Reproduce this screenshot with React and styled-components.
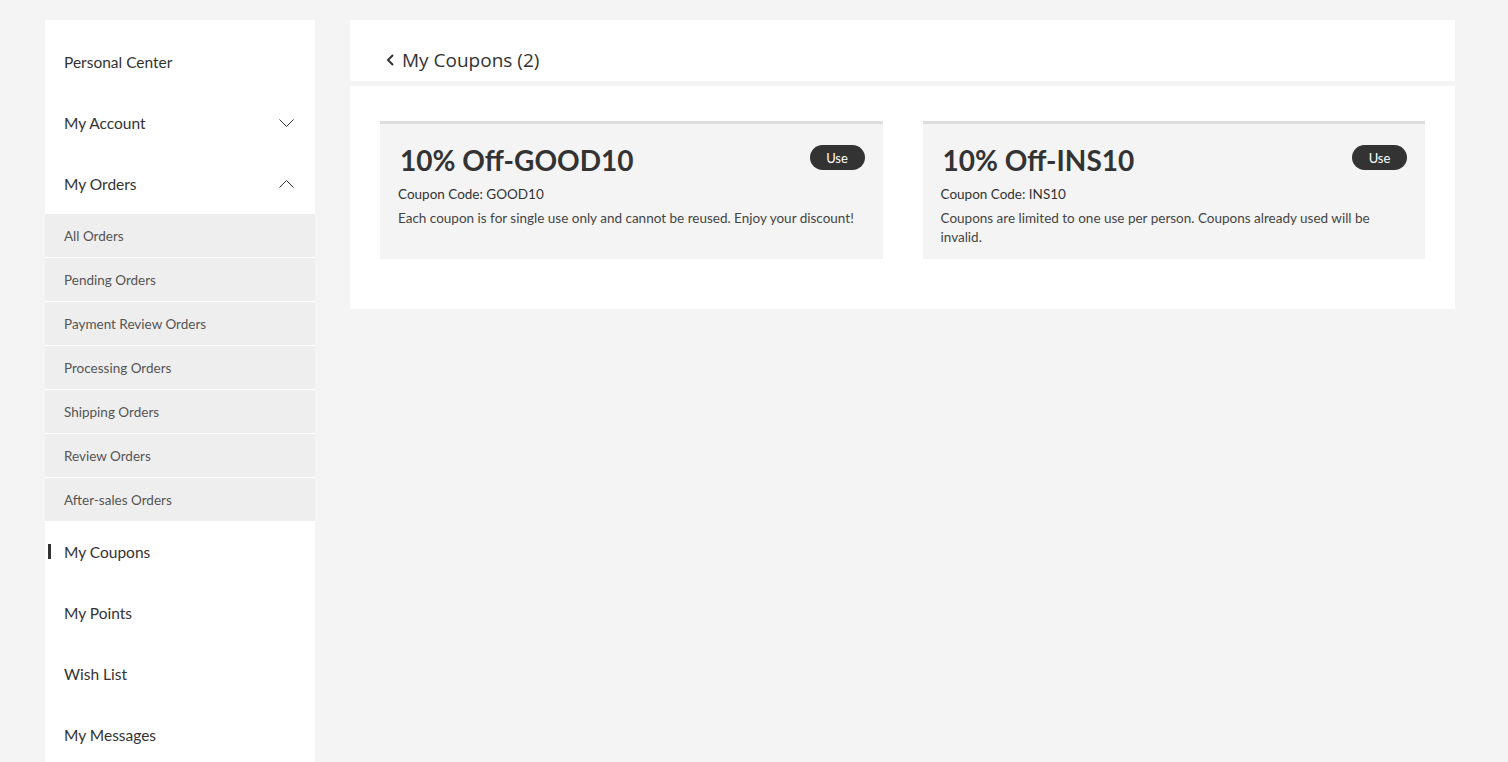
import React from 'react'
import styled, { createGlobalStyle } from 'styled-components'

const Global = createGlobalStyle`
  body {
    margin: 0;
    background: #f4f4f4;
    font-family: Lato, "Noto Sans", sans-serif;
    color: #333;
  }
`

const Page = styled.div`
  display: flex;
  align-items: flex-start;
  gap: 35px;
  padding: 20px 53px 0 45px;
`

const Sidebar = styled.nav`
  width: 270px;
  flex-shrink: 0;
  background: #fff;
  padding-top: 11px;
`

const NavItem = styled.div`
  position: relative;
  height: 61px;
  display: flex;
  align-items: center;
  justify-content: space-between;
  padding: 0 21px 0 19px;
  font-size: 15.5px;
  color: #333;
  ${p => p.$active && `
    &::before {
      content: '';
      position: absolute;
      left: 3px;
      top: 23px;
      width: 3px;
      height: 15px;
      background: #333;
    }
  `}
`

const SubList = styled.div`
  display: flex;
  flex-direction: column;
  gap: 1px;
  background: #fff;
`

const SubItem = styled.div`
  height: 43px;
  display: flex;
  align-items: center;
  padding-left: 19px;
  background: #eee;
  font-size: 13.5px;
  color: #555;
`

const Main = styled.main`
  flex: 1;
  display: flex;
  flex-direction: column;
  gap: 5px;
`

const Header = styled.div`
  height: 61px;
  background: #fff;
  display: flex;
  align-items: center;
  padding: 18px 36px 0;
  gap: 6px;
  font-family: "Open Sans", sans-serif;
  font-size: 19px;
  color: #333;
  box-sizing: border-box;
`

const Body = styled.div`
  background: #fff;
  padding: 35px 30px 50px;
  display: grid;
  grid-template-columns: 1fr 1fr;
  gap: 40px;
`

const Card = styled.div`
  background: #f4f4f4;
  border-top: 3px solid #ddd;
  padding: 19px 18px 10px 18px;
  min-height: 106px;
`

const CardTop = styled.div`
  display: flex;
  justify-content: space-between;
  align-items: flex-start;
`

const Title = styled.div`
  font-size: 28px;
  font-weight: 700;
  line-height: 34px;
  padding-left: 2px;
  color: #333;
`

const UseButton = styled.button`
  width: 55px;
  height: 25px;
  margin-top: 2px;
  border: none;
  border-radius: 13px;
  background: #333;
  color: #fff;
  font-family: inherit;
  font-size: 13px;
  cursor: pointer;
`

const Code = styled.div`
  font-size: 13.5px;
  margin-top: 8px;
  line-height: 18px;
`

const Desc = styled.div`
  font-size: 13.5px;
  line-height: 19px;
  margin-top: 6px;
  color: #444;
`

const Chevron = ({ up }) => (
  <svg width="15" height="8" viewBox="0 0 15 8" fill="none" stroke="#333" strokeWidth="1">
    {up ? <polyline points="0.5,7.5 7.5,0.5 14.5,7.5" /> : <polyline points="0.5,0.5 7.5,7.5 14.5,0.5" />}
  </svg>
)

const Back = () => (
  <svg width="10" height="14" viewBox="0 0 10 14" fill="none" stroke="#333" strokeWidth="2">
    <polyline points="7,2 2,7 7,12" />
  </svg>
)

const subs = ['All Orders', 'Pending Orders', 'Payment Review Orders', 'Processing Orders', 'Shipping Orders', 'Review Orders', 'After-sales Orders']

const coupons = [
  { title: '10% Off-GOOD10', code: 'GOOD10', desc: 'Each coupon is for single use only and cannot be reused. Enjoy your discount!' },
  { title: '10% Off-INS10', code: 'INS10', desc: 'Coupons are limited to one use per person. Coupons already used will be invalid.' },
]

export default function App() {
  return (
    <>
      <Global />
      <Page>
        <Sidebar>
          <NavItem>Personal Center</NavItem>
          <NavItem>My Account <Chevron /></NavItem>
          <NavItem>My Orders <Chevron up /></NavItem>
          <SubList>
            {subs.map(s => <SubItem key={s}>{s}</SubItem>)}
          </SubList>
          <NavItem $active>My Coupons</NavItem>
          <NavItem>My Points</NavItem>
          <NavItem>Wish List</NavItem>
          <NavItem>My Messages</NavItem>
        </Sidebar>
        <Main>
          <Header><Back />My Coupons (2)</Header>
          <Body>
            {coupons.map(c => (
              <Card key={c.code}>
                <CardTop>
                  <Title>{c.title}</Title>
                  <UseButton>Use</UseButton>
                </CardTop>
                <Code>Coupon Code: {c.code}</Code>
                <Desc>{c.desc}</Desc>
              </Card>
            ))}
          </Body>
        </Main>
      </Page>
    </>
  )
}
